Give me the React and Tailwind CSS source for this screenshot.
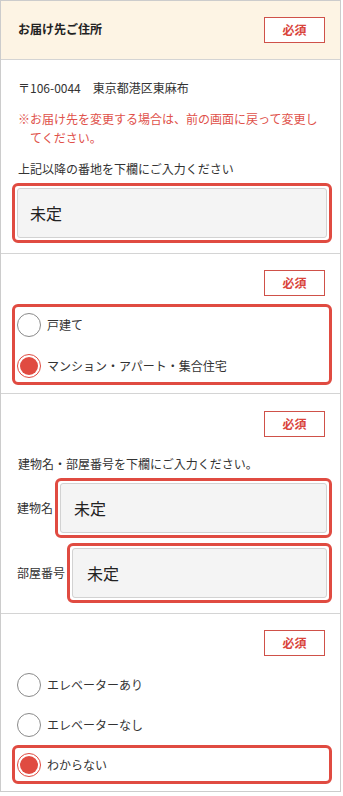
import React from 'react';

const font = { fontFamily: '"Noto Sans CJK JP", "Noto Sans", sans-serif' };

function Badge() {
    return (
        <div className="w-[61px] h-[26px] flex items-center justify-center border border-[#cf5149] text-[#d9443b] text-[12px] font-bold bg-white">
            必須
        </div>
    );
}

function Radio({ checked }) {
    if (checked) {
        return (
            <span className="w-[24px] h-[24px] rounded-full border border-[#e04b41] bg-white flex items-center justify-center shrink-0">
                <span className="w-[18px] h-[18px] rounded-full bg-[#e04b41]" />
            </span>
        );
    }
    return <span className="w-[24px] h-[24px] rounded-full border border-[#8a8a8a] bg-white shrink-0" />;
}

function RadioRow({ label, checked }) {
    return (
        <div className="flex items-center gap-[6px] h-[24px]">
            <Radio checked={checked} />
            <span className="text-[12px] text-[#333]">{label}</span>
        </div>
    );
}

function Field({ className = '', inputClass = '' }) {
    return (
        <div className={`border-[3px] border-[#e04b41] rounded-[6px] p-[2px] ${className}`}>
            <div className={`h-[50px] bg-[#f4f4f4] border border-[#d2d2d2] rounded-[3px] flex items-center text-[16px] text-[#222] ${inputClass}`}>
                未定
            </div>
        </div>
    );
}

export default function App() {
    return (
        <div className="w-[341px] border border-[#cccccc] bg-white text-[#333]" style={font}>
            {/* header */}
            <div className="h-[59px] bg-[#fdf4e4] border-b border-[#d4d4d4] flex items-center justify-between pl-[17px] pr-[15px]">
                <h2 className="text-[12px] font-bold text-[#222] -mt-[3px]">お届け先ご住所</h2>
                <Badge />
            </div>

            {/* address */}
            <div className="pl-[11px] pr-[8px] pt-[18px] pb-[10px] border-b border-[#d4d4d4]">
                <p className="pl-[6px] text-[12px] leading-[19px]">〒106-0044　東京都港区東麻布</p>
                <p className="mt-[12px] pl-[18px] pr-[12px] -indent-[12px] text-[12px] leading-[19px] text-[#e0514a]">
                    ※お届け先を変更する場合は、前の画面に戻って変更してください。
                </p>
                <p className="mt-[12px] pl-[6px] text-[12px] leading-[19px]">上記以降の番地を下欄にご入力ください</p>
                <Field className="mt-[5px]" inputClass="pl-[12px]" />
            </div>

            {/* house type */}
            <div className="pl-[11px] pr-[8px] pt-[16px] pb-[8px] border-b border-[#d4d4d4]">
                <div className="flex justify-end pr-[7px]">
                    <Badge />
                </div>
                <div className="mt-[8px] border-[3px] border-[#e04b41] rounded-[6px] pl-[2px] pt-[6px] pb-[4px] flex flex-col gap-[17px]">
                    <RadioRow label="戸建て" />
                    <RadioRow label="マンション・アパート・集合住宅" checked />
                </div>
            </div>

            {/* building */}
            <div className="pl-[11px] pr-[8px] pt-[17px] pb-[10px] border-b border-[#d4d4d4]">
                <div className="flex justify-end pr-[7px]">
                    <Badge />
                </div>
                <p className="mt-[18px] pl-[6px] text-[12px] leading-[17px]">建物名・部屋番号を下欄にご入力ください。</p>
                <div className="mt-[6px] flex items-center gap-[2px] pl-[5px]">
                    <span className="text-[12px] whitespace-nowrap">建物名</span>
                    <Field className="flex-1" inputClass="pl-[13px]" />
                </div>
                <div className="mt-[5px] flex items-center gap-[2px] pl-[5px]">
                    <span className="text-[12px] whitespace-nowrap">部屋番号</span>
                    <Field className="flex-1" inputClass="pl-[14px]" />
                </div>
            </div>

            {/* elevator */}
            <div className="pl-[11px] pr-[8px] pt-[16px] pb-[7px]">
                <div className="flex justify-end pr-[7px]">
                    <Badge />
                </div>
                <div className="mt-[17px] pl-[5px] flex flex-col gap-[16px]">
                    <RadioRow label="エレベーターあり" />
                    <RadioRow label="エレベーターなし" />
                </div>
                <div className="mt-[8px] border-[3px] border-[#e04b41] rounded-[6px] pl-[2px] pt-[5px] pb-[4px]">
                    <RadioRow label="わからない" checked />
                </div>
            </div>
        </div>
    );
}
